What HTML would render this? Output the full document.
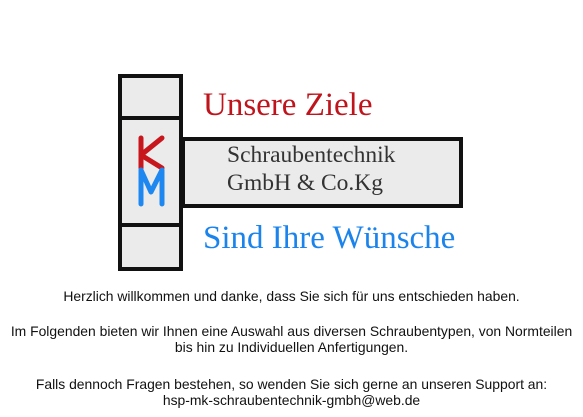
<html><head><style>
body{margin:0;width:583px;height:417px;background:#fff;position:relative;font-family:"Liberation Sans",sans-serif;overflow:hidden}
.b{position:absolute;border:4px solid #111;background:#ebebeb;box-sizing:border-box}
.s{position:absolute;font-family:"Liberation Serif",serif;white-space:nowrap}
.t{position:absolute;left:0;width:583px;text-align:center;font-size:13.9px;color:#111;line-height:16px}
</style></head><body>
<div class="b" style="left:181px;top:137px;width:282px;height:71px"></div>
<div class="b" style="left:118px;top:74px;width:65px;height:46px"></div>
<div class="b" style="left:118px;top:116px;width:65px;height:111px"></div>
<div class="b" style="left:118px;top:223px;width:65px;height:48px"></div>
<svg style="position:absolute;left:130px;top:130px" width="45" height="80">
<path d="M11 8V38M11 25L32 8M11 25L32 38" stroke="#c8161d" stroke-width="5" fill="none" stroke-linecap="round"/>
<path d="M11 74V40L21 62L32 40V74" stroke="#1e88f0" stroke-width="5" fill="none" stroke-linecap="round" stroke-linejoin="round"/>
</svg>
<div class="s" style="left:203px;top:87px;font-size:33px;color:#c0141c">Unsere Ziele</div>
<div class="s" style="left:227px;top:142px;font-size:23.5px;color:#333">Schraubentechnik</div>
<div class="s" style="left:227px;top:170px;font-size:23.5px;color:#333">GmbH &amp; Co.Kg</div>
<div class="s" style="left:203px;top:220px;font-size:33px;color:#1a84ec">Sind Ihre Wünsche</div>
<div class="t" style="top:288px">Herzlich willkommen und danke, dass Sie sich für uns entschieden haben.</div>
<div class="t" style="top:323px">Im Folgenden bieten wir Ihnen eine Auswahl aus diversen Schraubentypen, von Normteilen<br>bis hin zu Individuellen Anfertigungen.</div>
<div class="t" style="top:376px">Falls dennoch Fragen bestehen, so wenden Sie sich gerne an unseren Support an:<br>hsp-mk-schraubentechnik-gmbh@web.de</div>
</body></html>
